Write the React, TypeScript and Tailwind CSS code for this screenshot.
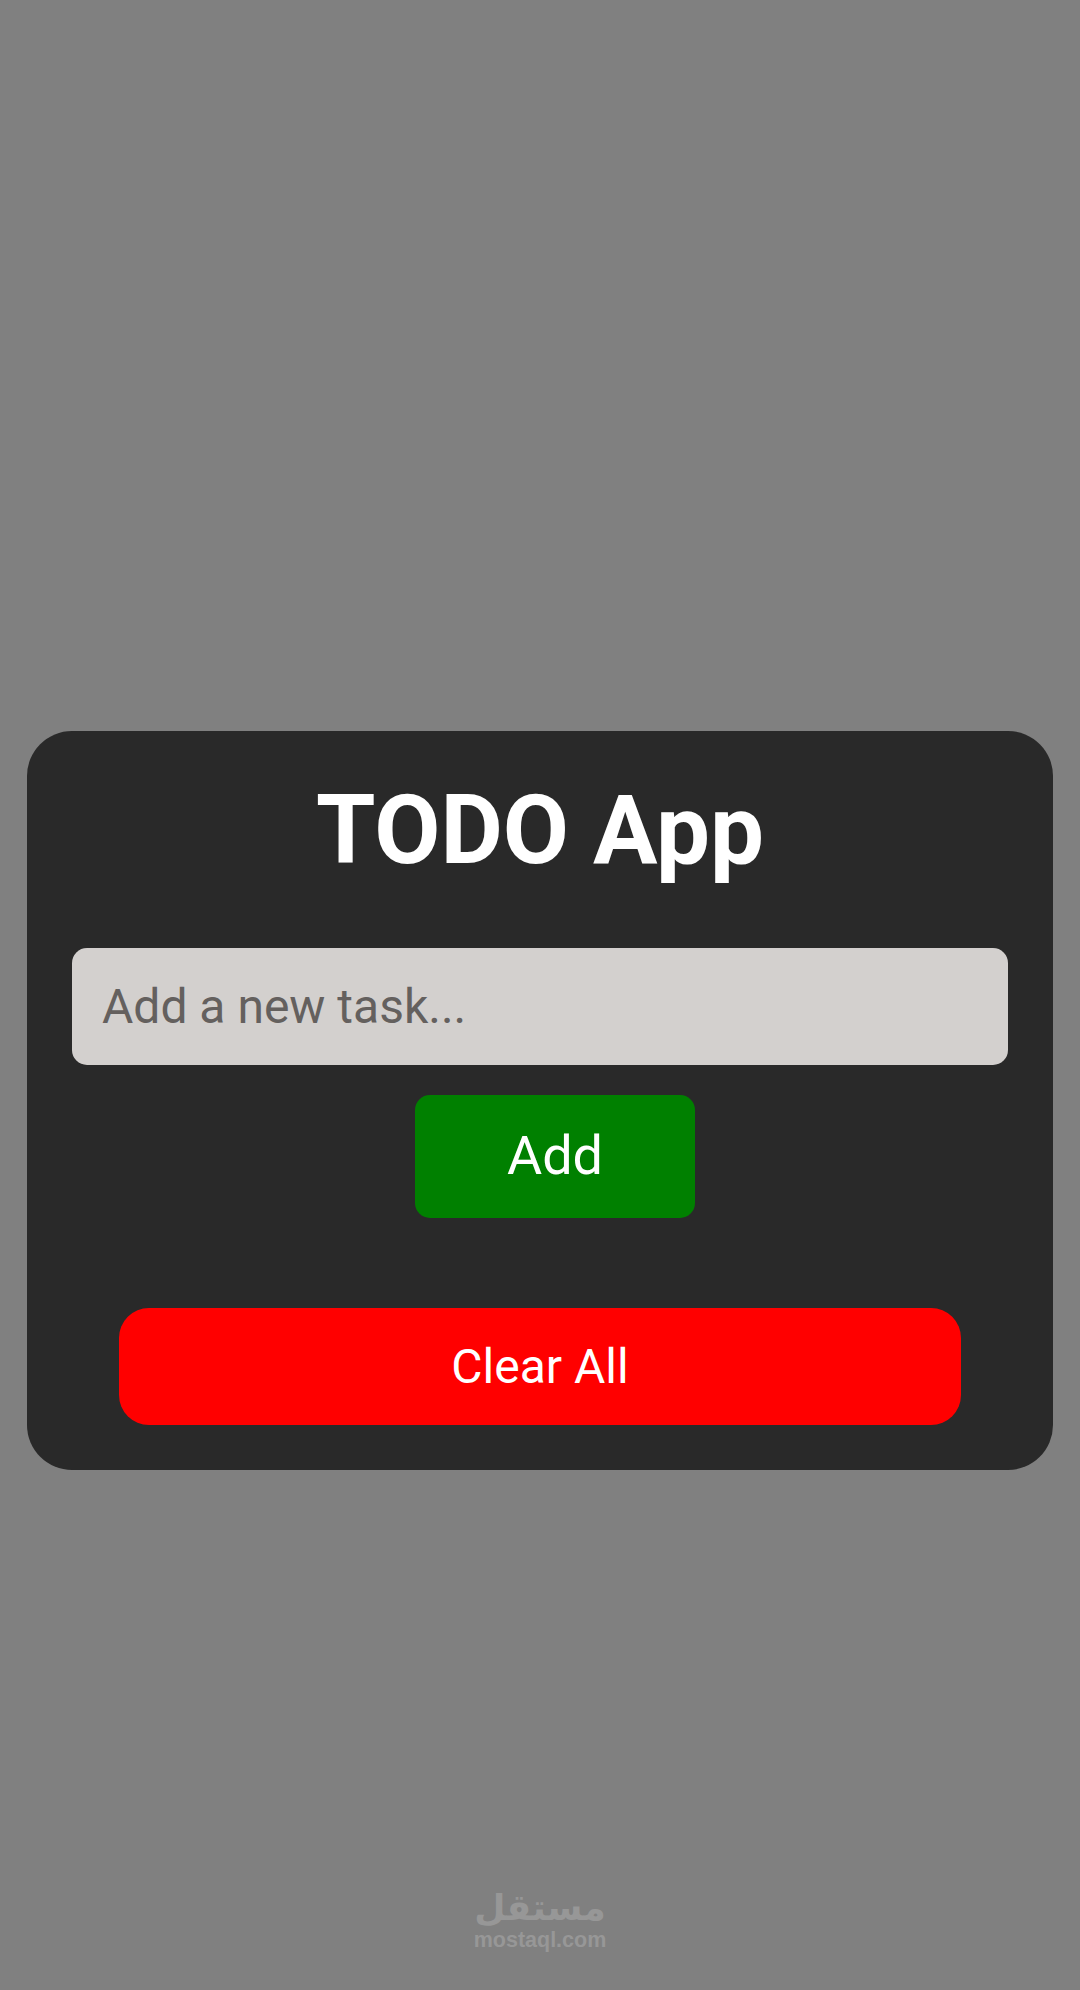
export default function App() {
  return (
    <div className="relative h-[1990px] w-full overflow-hidden bg-[#808080] pt-[731px] px-[27px] font-['Roboto',sans-serif]">
      <div className="rounded-[45px] bg-[#292929] px-[45px] pt-[43px] pb-[45px] flex flex-col items-center">
        <h1 className="text-[96px] leading-[112px] font-bold text-white text-center">TODO App</h1>
        <input
          type="text"
          placeholder="Add a new task..."
          className="mt-[62px] w-full h-[117px] rounded-[15px] bg-[#d3d0ce] px-[30px] text-[48px] text-black placeholder:text-[#64605e] outline-none"
        />
        <button className="mt-[30px] ml-[30px] w-[280px] h-[123px] rounded-[15px] bg-[#008000] pb-[2px] text-[54px] text-white">Add</button>
        <button className="mt-[90px] w-[842px] h-[117px] rounded-[30px] bg-[#ff0000] text-[48px] text-white">Clear All</button>
      </div>

      <div className="absolute left-0 right-0 top-[1887px] flex flex-col items-center text-[#979797]">
        <div dir="rtl" className="text-[36px] leading-[42px] font-bold font-['DejaVu_Sans',sans-serif]">مستقل</div>
        <div className="text-[21.5px] leading-[22px] font-bold font-['Liberation_Sans',sans-serif]">mostaql.com</div>
      </div>
    </div>
  );
}
